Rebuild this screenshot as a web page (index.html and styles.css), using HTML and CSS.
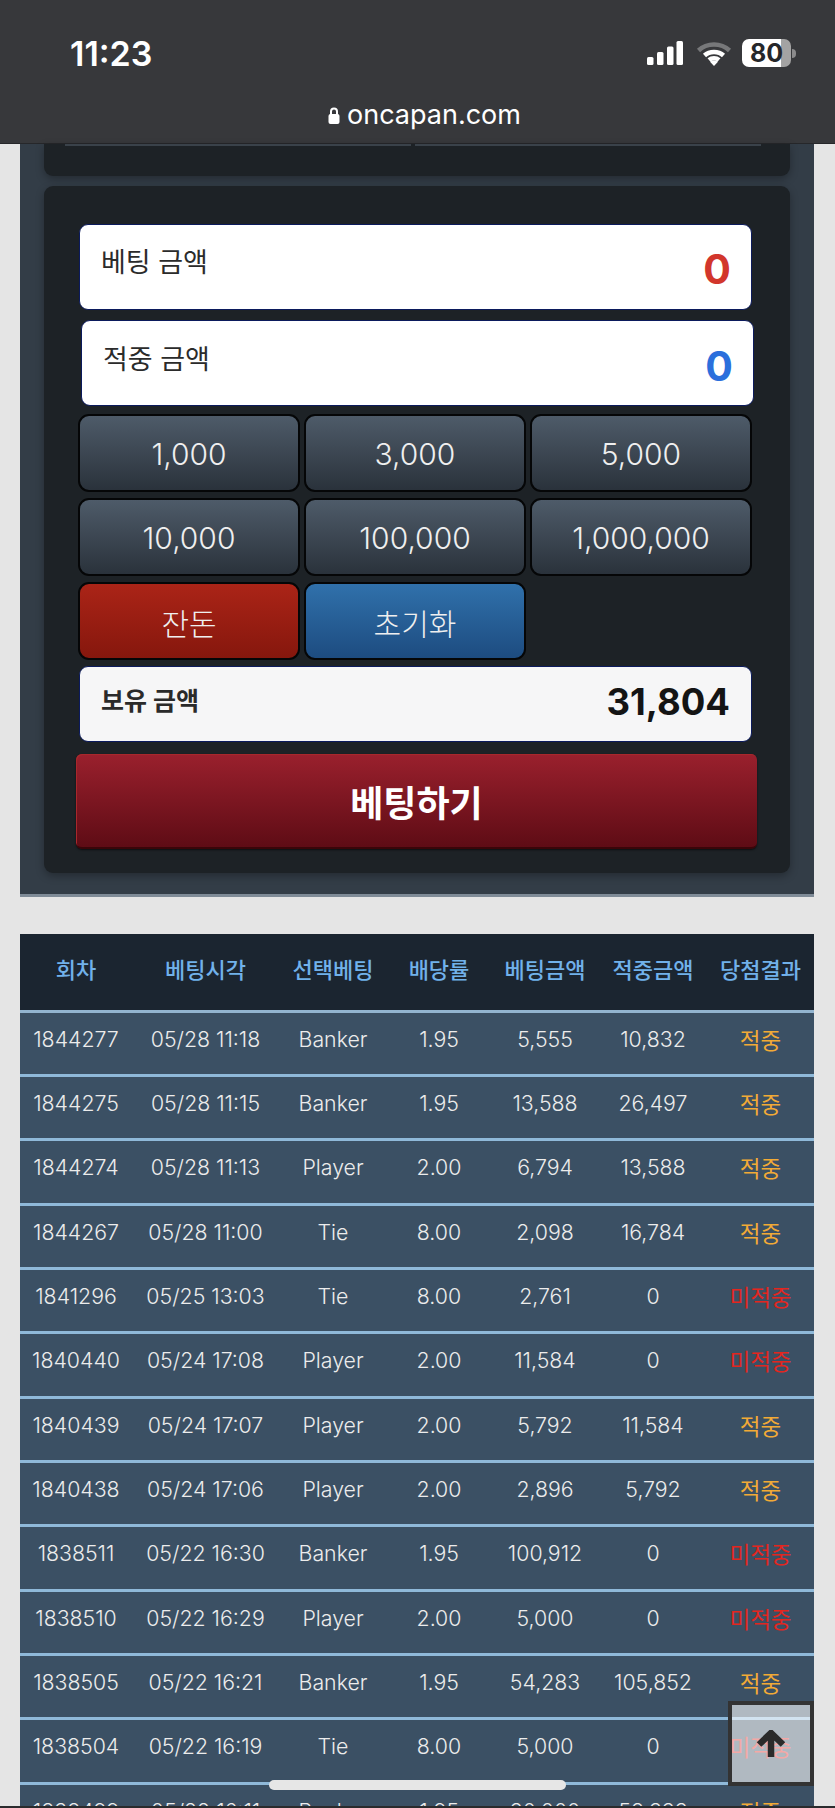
FILE: index.html
```html
<!DOCTYPE html>
<html lang="ko">
<head>
<meta charset="utf-8">
<title>oncapan.com</title>
<link rel="stylesheet" href="styles.css">
</head>
<body>
<header class="topbar">
  <div class="status">
    <span class="time">11:23</span>
    <div class="status-icons">
      <svg class="signal" width="36" height="24" viewBox="0 0 36 24"><rect x="0" y="16" width="6.5" height="8" rx="1.5"/><rect x="10" y="11" width="6.5" height="13" rx="1.5"/><rect x="20" y="5.5" width="6.5" height="18.5" rx="1.5"/><rect x="29.5" y="0" width="6.5" height="24" rx="1.5"/></svg>
      <svg class="wifi" width="36" height="25" viewBox="0 0 36 25"><path class="wifi-dim" d="M2.5 9.5C11 1.5 25 1.5 33.5 9.5" /><path class="wifi-on" d="M8.5 14.5C13.5 9.8 22.5 9.8 27.5 14.5"/><path class="wifi-on" d="M13 19C15.8 16.6 20.2 16.6 23 19" /><path class="wifi-dot" d="M18 25l-4-4.2c2.3-1.8 5.7-1.8 8 0z"/></svg>
      <div class="battery"><div class="battery-body"><span class="battery-level">80</span></div><span class="battery-nub"></span></div>
    </div>
  </div>
  <div class="url">
    <svg class="lock" width="12" height="17" viewBox="0 0 12 17"><path class="lock-arc" d="M3 8V4.5a3 3 0 0 1 6 0V8"/><rect x="0.5" y="7" width="11" height="10" rx="2"/></svg>
    <span>oncapan.com</span>
  </div>
</header>

<section class="panel">
  <div class="card card-clipped">
    <div class="clip-lines"><span></span><span></span></div>
  </div>
  <div class="card card-bet">
    <div class="amount-box">
      <span class="amount-label">베팅 금액</span>
      <span class="amount-value red">0</span>
    </div>
    <div class="amount-box amount-shift">
      <span class="amount-label">적중 금액</span>
      <span class="amount-value blue">0</span>
    </div>
    <div class="chips">
      <button class="chip">1,000</button>
      <button class="chip">3,000</button>
      <button class="chip">5,000</button>
      <button class="chip">10,000</button>
      <button class="chip">100,000</button>
      <button class="chip">1,000,000</button>
      <button class="chip chip-red">잔돈</button>
      <button class="chip chip-blue">초기화</button>
    </div>
    <div class="balance">
      <span class="balance-label">보유 금액</span>
      <span class="balance-value">31,804</span>
    </div>
    <button class="bet-btn">베팅하기</button>
  </div>
</section>

<table class="history">
  <colgroup>
    <col class="c1"><col class="c2"><col class="c3"><col class="c4"><col class="c5"><col class="c6"><col class="c7">
  </colgroup>
  <thead>
    <tr><th>회차</th><th>베팅시각</th><th>선택베팅</th><th>배당률</th><th>베팅금액</th><th>적중금액</th><th>당첨결과</th></tr>
  </thead>
  <tbody>
    <tr><td>1844277</td><td>05/28 11:18</td><td>Banker</td><td>1.95</td><td>5,555</td><td>10,832</td><td class="hit">적중</td></tr>
    <tr><td>1844275</td><td>05/28 11:15</td><td>Banker</td><td>1.95</td><td>13,588</td><td>26,497</td><td class="hit">적중</td></tr>
    <tr><td>1844274</td><td>05/28 11:13</td><td>Player</td><td>2.00</td><td>6,794</td><td>13,588</td><td class="hit">적중</td></tr>
    <tr><td>1844267</td><td>05/28 11:00</td><td>Tie</td><td>8.00</td><td>2,098</td><td>16,784</td><td class="hit">적중</td></tr>
    <tr><td>1841296</td><td>05/25 13:03</td><td>Tie</td><td>8.00</td><td>2,761</td><td>0</td><td class="miss">미적중</td></tr>
    <tr><td>1840440</td><td>05/24 17:08</td><td>Player</td><td>2.00</td><td>11,584</td><td>0</td><td class="miss">미적중</td></tr>
    <tr><td>1840439</td><td>05/24 17:07</td><td>Player</td><td>2.00</td><td>5,792</td><td>11,584</td><td class="hit">적중</td></tr>
    <tr><td>1840438</td><td>05/24 17:06</td><td>Player</td><td>2.00</td><td>2,896</td><td>5,792</td><td class="hit">적중</td></tr>
    <tr><td>1838511</td><td>05/22 16:30</td><td>Banker</td><td>1.95</td><td>100,912</td><td>0</td><td class="miss">미적중</td></tr>
    <tr><td>1838510</td><td>05/22 16:29</td><td>Player</td><td>2.00</td><td>5,000</td><td>0</td><td class="miss">미적중</td></tr>
    <tr><td>1838505</td><td>05/22 16:21</td><td>Banker</td><td>1.95</td><td>54,283</td><td>105,852</td><td class="hit">적중</td></tr>
    <tr><td>1838504</td><td>05/22 16:19</td><td>Tie</td><td>8.00</td><td>5,000</td><td>0</td><td class="miss">미적중</td></tr>
    <tr><td>1838499</td><td>05/22 16:11</td><td>Banker</td><td>1.95</td><td>30,000</td><td>58,333</td><td class="hit">적중</td></tr>
  </tbody>
</table>

<button class="to-top" aria-label="위로">
  <svg width="30" height="28" viewBox="0 0 30 28"><path d="M3 14.5L15 3L27 14.5M15 5V27"/></svg>
</button>
<div class="home-bar"></div>
<div class="bottom-edge"></div>
</body>
</html>
```
FILE: styles.css
```css
* { box-sizing: border-box; }
html, body { margin: 0; height: 1808px; overflow: hidden; }
body {
  position: relative;
  background: #e5e5e5;
  font-family: Inter, "Noto Sans CJK KR", sans-serif;
}

/* Browser chrome */
.topbar {
  height: 144px;
  background: #37383b;
  border-bottom: 1px solid #26272a;
  color: #fff;
}
.status {
  display: flex;
  justify-content: space-between;
  align-items: center;
  height: 68px;
  padding: 38px 39px 0 70px;
}
.time {
  font-size: 34px;
  font-weight: 600;
  line-height: 30px;
  padding-top: 2px;
}
.status-icons { display: flex; align-items: center; }
.signal { fill: #fff; margin-right: 13px; }
.wifi { margin-right: 10px; }
.wifi path { fill: none; stroke-width: 4.5; }
.wifi-dim { stroke: #77787a; }
.wifi-on { stroke: #fff; }
.wifi .wifi-dot { fill: #fff; stroke: none; }
.battery { display: flex; align-items: center; }
.battery-body {
  width: 49px;
  height: 28px;
  border-radius: 7px;
  background: linear-gradient(90deg, #fff 0 79%, #a3a3a3 79% 100%);
  display: flex;
  align-items: center;
  justify-content: center;
}
.battery-level {
  font-size: 25px;
  font-weight: 700;
  color: #26272a;
  line-height: 28px;
}
.battery-nub {
  width: 4px;
  height: 9px;
  margin-left: 1px;
  background: #8b8b8c;
  border-radius: 0 4px 4px 0;
}
.url {
  display: flex;
  align-items: center;
  justify-content: center;
  gap: 7px;
  margin-top: 30px;
  height: 34px;
  padding-left: 14px;
  font-size: 27px;
  line-height: 34px;
}
.lock { fill: #fff; }
.lock .lock-arc { fill: none; stroke: #fff; stroke-width: 2; }

/* Betting panel */
.panel {
  margin: 0 21px 37px 20px;
  height: 753px;
  padding: 0 24px;
  background: #333d47;
  border-bottom: 3px solid #7f8b97;
}
.card {
  background: #1d2226;
  border-radius: 9px;
  box-shadow: 0 3px 8px rgba(0, 0, 0, .3);
}
.card-clipped {
  height: 32px;
  margin-bottom: 10px;
  border-radius: 0 0 9px 9px;
  padding: 0 29px 0 21px;
}
.clip-lines { display: flex; gap: 4px; }
.clip-lines span { flex: 1; height: 2px; background: #3a424a; }
.card-bet {
  height: 687px;
  padding: 38px 0 0 35px;
}
.amount-box {
  display: flex;
  justify-content: space-between;
  width: 673px;
  height: 86px;
  padding: 18px 20px 0 21px;
  margin-bottom: 10px;
  background: #fff;
  border: 1px solid #0b1a5c;
  border-radius: 9px;
}
.amount-shift { margin-left: 2px; margin-bottom: 8px; padding-top: 19px; }
.amount-label {
  font-size: 27px;
  line-height: 40px;
  font-weight: 400;
  color: #2b2b2b;
}
.amount-value {
  font-size: 41px;
  font-weight: 700;
  line-height: 52px;
}
.red { color: #d2362c; }
.blue { color: #2b6fdc; }

.chips {
  display: grid;
  grid-template-columns: repeat(3, 222px);
  grid-auto-rows: 78px;
  column-gap: 4px;
  row-gap: 6px;
  margin-left: -1px;
}
.chip {
  padding: 2px 0 0;
  font-family: inherit;
  font-size: 30px;
  font-weight: 300;
  color: #efefef;
  border: 2px solid #050607;
  border-radius: 11px;
  background: linear-gradient(#4e5b69, #2a323b);
}
.chip-red { background: linear-gradient(#ab2417, #86170d); }
.chip-blue { background: linear-gradient(#3071ab, #1d4c80); }

.balance {
  display: flex;
  justify-content: space-between;
  align-items: center;
  width: 673px;
  height: 76px;
  margin-top: 6px;
  padding: 0 21px 0 21px;
  background: #f6f6f7;
  border: 1px solid #0b1a5c;
  border-radius: 9px;
}
.balance-label {
  font-size: 25px;
  font-weight: 700;
  color: #2a2a2a;
  margin-bottom: 10px;
}
.balance-value {
  font-size: 36.5px;
  font-weight: 700;
  color: #141414;
  margin-bottom: 4px;
}
.bet-btn {
  display: block;
  width: 681px;
  height: 95px;
  margin: 12px 0 0 -3px;
  padding: 0;
  font-family: inherit;
  font-size: 36px;
  font-weight: 700;
  color: #fff;
  border: 0;
  border-bottom: 2px solid #3a0509;
  border-radius: 6px;
  background: linear-gradient(#9a202d, #5e0c15);
  box-shadow: inset 1px 1px 0 #a8282c, 0 1px 2px rgba(0, 0, 0, .6);
}

/* History table */
.history {
  width: 794px;
  margin-left: 20px;
  table-layout: fixed;
  border-collapse: collapse;
  background: #3b5064;
  text-align: center;
}
.c1 { width: 112px; }
.c2 { width: 147px; }
.c3 { width: 108px; }
.c4 { width: 104px; }
.c5 { width: 108px; }
.c6 { width: 108px; }
.c7 { width: 107px; }
.history th {
  height: 77px;
  padding: 0 0 8px;
  background: #1b2530;
  border-bottom: 3px solid #93b5d0;
  font-size: 22px;
  font-weight: 500;
  color: #71b1ea;
}
.history td {
  height: 64.35px;
  padding: 0 0 9px;
  border-bottom: 3px solid #8fb9d9;
  font-size: 21.3px;
  font-weight: 300;
  color: #ececec;
}
.history td.hit { color: #f2aa36; font-size: 22.5px; font-weight: 400; }
.history td.miss { color: #e3261f; font-size: 22.5px; font-weight: 400; }

/* Overlays */
.to-top {
  position: absolute;
  left: 728px;
  top: 1701px;
  width: 86px;
  height: 85px;
  padding: 0;
  display: flex;
  align-items: center;
  justify-content: center;
  border: 4px solid #333;
  background: rgba(255, 255, 255, .6);
}
.to-top svg { fill: none; stroke: #2b2b2b; stroke-width: 6.5; }
.home-bar {
  position: absolute;
  left: 269px;
  top: 1780px;
  width: 297px;
  height: 10px;
  border-radius: 5px;
  background: #e6e6e6;
}
.bottom-edge {
  position: absolute;
  left: 0;
  right: 0;
  top: 1806px;
  height: 2px;
  background: #2a2b2d;
}
```
